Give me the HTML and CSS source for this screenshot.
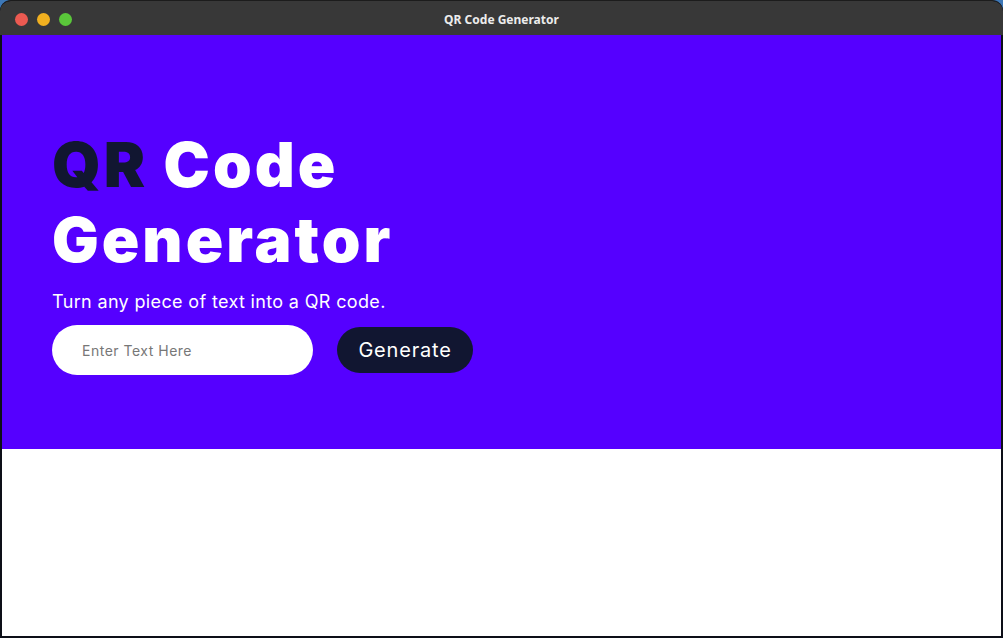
FILE: index.html
```html
<!DOCTYPE html>
<html lang="en">
<head>
<meta charset="utf-8">
<title>QR Code Generator</title>
<link rel="stylesheet" href="styles.css">
</head>
<body>
<div class="window">
  <div class="titlebar">
    <div class="lights">
      <span class="light red"></span>
      <span class="light yellow"></span>
      <span class="light green"></span>
    </div>
    <div class="title">QR Code Generator</div>
  </div>
  <div class="content">
    <section class="hero">
      <h1 class="heading"><span class="line"><span class="qr">QR</span> Code</span><span class="line">Generator</span></h1>
      <p class="lead">Turn any piece of text into a QR code.</p>
      <div class="form">
        <input class="text-input" type="text" placeholder="Enter Text Here">
        <button class="btn" type="button">Generate</button>
      </div>
    </section>
    <section class="result"></section>
  </div>
</div>
</body>
</html>
```
FILE: styles.css
```css
* { box-sizing: border-box; }
html, body {
  margin: 0;
  width: 1003px;
  height: 638px;
  overflow: hidden;
}
body {
  background: linear-gradient(180deg, #3d78b8 0%, #2f5f99 100%);
}
.window {
  width: 1003px;
  height: 638px;
  display: flex;
  flex-direction: column;
  border-radius: 11px 11px 0 0;
  overflow: hidden;
  background: #0d0f18;
  padding: 0 2px 2px 2px;
  border-top: 1px solid #1c1c1c;
}
.titlebar {
  height: 34px;
  background: #383838;
  display: flex;
  align-items: center;
  position: relative;
  margin: 0 -2px;
  border-radius: 10px 10px 0 0;
}
.lights {
  display: flex;
  gap: 9px;
  padding-left: 15px;
  padding-top: 2px;
}
.light {
  width: 13px;
  height: 13px;
  border-radius: 50%;
  display: block;
}
.red { background: #ec5a51; }
.yellow { background: #f1b020; }
.green { background: #5ac73a; }
.title {
  position: absolute;
  left: 0;
  right: 0;
  top: 11px;
  text-align: center;
  color: #ececec;
  font-family: "Noto Sans", "DejaVu Sans", sans-serif;
  font-weight: 700;
  font-size: 12px;
  line-height: 16px;
}
.content {
  flex: 1;
  display: flex;
  flex-direction: column;
  background: #fff;
}
.hero {
  height: 414px;
  background: #5500ff;
  padding: 92px 0 0 50px;
  font-family: "Inter", "Liberation Sans", sans-serif;
}
.heading {
  margin: 0;
  color: #fff;
  font-family: "Inter", "Liberation Sans", sans-serif;
  font-weight: 900;
  font-size: 62px;
  line-height: 75px;
  letter-spacing: 3px;
  display: flex;
  flex-direction: column;
}
.line {
  display: block;
  height: 75px;
}
.qr { color: #111631; }
.lead {
  margin: 13px 0 11px 0;
  color: #fff;
  font-size: 18px;
  line-height: 24px;
  font-weight: 400;
  letter-spacing: 0.35px;
}
.form {
  display: flex;
  align-items: center;
  gap: 24px;
}
.text-input {
  width: 261px;
  height: 50px;
  border: none;
  border-radius: 25px;
  background: #fff;
  padding: 0 0 0 30px;
  font-family: "Inter", "Liberation Sans", sans-serif;
  font-size: 14px;
  letter-spacing: 0.5px;
  outline: none;
}
.text-input::placeholder { color: #777; }
.btn {
  width: 136px;
  height: 46px;
  border: none;
  border-radius: 23px;
  background: #111631;
  color: #fff;
  font-family: "Inter", "Liberation Sans", sans-serif;
  font-size: 20px;
  letter-spacing: 0.8px;
  padding: 0;
}
.result {
  flex: 1;
  background: #fff;
}
```
